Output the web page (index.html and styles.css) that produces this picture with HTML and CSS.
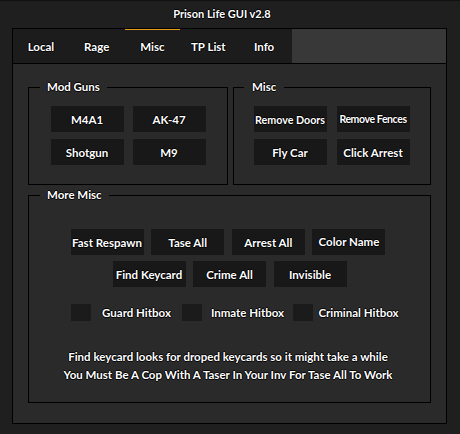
FILE: index.html
```html
<!DOCTYPE html>
<html>
<head>
<meta charset="utf-8">
<link rel="stylesheet" href="styles.css">
</head>
<body>
<div class="window">
  <div class="title">Prison Life GUI v2.8</div>
  <div class="panel">
    <div class="tabs">
      <div class="tab">Local</div>
      <div class="tab">Rage</div>
      <div class="tab active">Misc</div>
      <div class="tab">TP List</div>
      <div class="tab">Info</div>
      <div class="tab-fill"></div>
    </div>
    <div class="content">
      <div class="top-row">
        <div class="group group-guns">
          <div class="group-title">Mod Guns</div>
          <div class="grid grid-guns">
            <div class="btn">M4A1</div>
            <div class="btn">AK-47</div>
            <div class="btn">Shotgun</div>
            <div class="btn">M9</div>
          </div>
        </div>
        <div class="group group-misc">
          <div class="group-title">Misc</div>
          <div class="grid grid-misc">
            <div class="btn btn-doors">Remove Doors</div>
            <div class="btn btn-fences">Remove Fences</div>
            <div class="btn">Fly Car</div>
            <div class="btn">Click Arrest</div>
          </div>
        </div>
      </div>
      <div class="group group-more">
        <div class="group-title">More Misc</div>
        <div class="btn-row row1">
          <div class="btn">Fast Respawn</div>
          <div class="btn">Tase All</div>
          <div class="btn">Arrest All</div>
          <div class="btn btn-raised">Color Name</div>
        </div>
        <div class="btn-row row2">
          <div class="btn">Find Keycard</div>
          <div class="btn">Crime All</div>
          <div class="btn">Invisible</div>
        </div>
        <div class="check-row">
          <div class="check"><span class="box"></span><span class="check-label">Guard Hitbox</span></div>
          <div class="check"><span class="box"></span><span class="check-label">Inmate Hitbox</span></div>
          <div class="check"><span class="box"></span><span class="check-label">Criminal Hitbox</span></div>
        </div>
        <div class="notes">
          <div>Find keycard looks for droped keycards so it might take a while</div>
          <div>You Must Be A Cop With A Taser In Your Inv For Tase All To Work</div>
        </div>
      </div>
    </div>
  </div>
</div>
</body>
</html>
```

FILE: styles.css
```css
* { box-sizing: border-box; }
html, body { margin: 0; padding: 0; }
body {
  width: 460px;
  height: 434px;
  background: #1f1f1f;
  font-family: "Lato", "Noto Sans", sans-serif;
  font-weight: 700;
  color: #ffffff;
  overflow: hidden;
}
.window {
  width: 460px;
  height: 434px;
  border-top: 1px solid #111;
}
.title, .tab, .btn, .check-label, .notes, .group-title {
  text-shadow: -1px 0 rgba(0,0,0,0.9), 1px 0 rgba(0,0,0,0.9), 0 -1px rgba(0,0,0,0.9), 0 1px rgba(0,0,0,0.9);
}
.title {
  height: 27px;
  line-height: 25px;
  font-size: 11px;
  text-align: center;
  padding-right: 16px;
}
.panel {
  margin-left: 12px;
  width: 435px;
  height: 396px;
  border: 1px solid #000;
  background: #2a2a2a;
  display: flex;
  flex-direction: column;
}
.tabs {
  display: flex;
  height: 35px;
  border-bottom: 1px solid #000;
  background: #1c1c1c;
  flex: none;
}
.tab {
  width: 55.8px;
  text-align: center;
  font-size: 11.5px;
  line-height: 35px;
  flex: none;
}
.tab.active {
  box-shadow: inset 0 1px 0 #e89c1e;
}
.tab-fill {
  flex: 1;
  background: #383838;
}
.content {
  padding: 23px 15px 0 15px;
}
.top-row {
  display: flex;
  gap: 5px;
}
.group {
  position: relative;
  border: 1px solid #000;
}
.group-title {
  position: absolute;
  top: -9px;
  height: 16px;
  line-height: 16px;
  font-size: 11.5px;
  background: #2a2a2a;
  padding: 0 7px;
}
.group-guns { width: 200px; padding: 18px 0 19px; }
.group-guns .group-title { left: 11px; }
.group-misc { width: 198px; padding: 18px 0 19px; }
.group-misc .group-title { left: 10px; padding: 0 8px; }
.grid {
  display: grid;
  grid-template-columns: 73px 73px;
  grid-auto-rows: 26px;
  row-gap: 7px;
  justify-content: center;
}
.grid-guns { column-gap: 9px; }
.grid-misc { column-gap: 10px; padding-right: 1px; }
.btn {
  background: #181818;
  height: 26px;
  display: flex;
  align-items: center;
  justify-content: center;
  font-size: 11.5px;
  white-space: nowrap;
}
.btn-doors { font-size: 10.7px; }
.btn-fences { font-size: 10.5px; letter-spacing: -0.4px; }
.btn-raised { padding-bottom: 2px; }
.group-more {
  margin-top: 10px;
  width: 403px;
  height: 208px;
  padding-top: 33px;
}
.group-more .group-title { left: 11px; }
.btn-row {
  display: flex;
  justify-content: center;
}
.btn-row .btn { width: 73px; }
.row1 { gap: 7.67px; padding-right: 3px; }
.row2 { gap: 7.5px; margin-top: 6px; }
.check-row {
  display: flex;
  margin-top: 17px;
  padding-left: 42px;
}
.check {
  display: flex;
  width: 111px;
  align-items: center;
}
.box {
  width: 20px;
  height: 17px;
  background: #1b1b1b;
  flex: none;
}
.check-label {
  flex: 1;
  text-align: center;
  font-size: 11.5px;
  white-space: nowrap;
}
.notes {
  margin-top: 27px;
  text-align: center;
  font-size: 11.5px;
  line-height: 18px;
  padding-right: 3px;
  white-space: nowrap;
}
```
